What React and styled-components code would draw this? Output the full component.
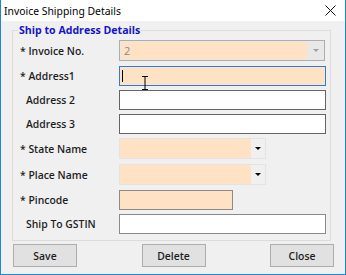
import React from "react";
import styled, { createGlobalStyle } from "styled-components";

const GlobalStyle = createGlobalStyle`
  html, body {
    margin: 0;
    padding: 0;
    background: #f0f0f0;
  }
`;

const uiFont = `"Open Sans", "Noto Sans", "Liberation Sans", sans-serif`;

const Window = styled.div`
  box-sizing: border-box;
  width: 346px;
  height: 275px;
  background: #f0f0f0;
  border: 1px solid #1c86d9;
  border-top: none;
  display: flex;
  flex-direction: column;
  position: relative;
  overflow: hidden;
`;

const TitleBar = styled.div`
  height: 21px;
  flex: none;
  background: #fff;
  display: flex;
  align-items: center;
  justify-content: space-between;
  padding: 0 9px 0 3px;
  font-family: "Noto Sans", "Liberation Sans", sans-serif;
  font-size: 10.4px;
  color: #000;
`;

const CloseX = styled.svg`
  width: 11px;
  height: 11px;
`;

const Body = styled.div`
  flex: 1;
  display: flex;
  flex-direction: column;
  padding: 2px 11px 0 11px;
`;

const Group = styled.fieldset`
  margin: 0 3px 0 0;
  padding: 3px 3px 6px 7px;
  border: 1px solid #dcdcdc;
  display: flex;
  flex-direction: column;
`;

const Legend = styled.legend`
  padding: 0 1px;
  margin-left: -2px;
  font-family: ${uiFont};
  font-weight: 700;
  font-size: 10.6px;
  line-height: 14px;
  color: #1515c8;
`;

const Row = styled.div`
  display: flex;
  align-items: center;
  margin-top: ${(p) => p.$mt ?? 4}px;
`;

const Label = styled.div`
  width: ${(p) => (p.$indent ? 93 : 99)}px;
  padding-left: ${(p) => (p.$indent ? "6px" : "0")};
  font-family: ${uiFont};
  font-weight: 600;
  font-size: 10.4px;
  color: #1e1e1e;
`;

const TextBox = styled.div`
  box-sizing: border-box;
  height: 20px;
  width: ${(p) => p.$w || "207px"};
  background: ${(p) => (p.$req ? "#ffe1c4" : "#fff")};
  border: 1px solid ${(p) => (p.$focus ? "#2a7fd4" : p.$light ? "#8a8a8a" : "#646464")};
  display: flex;
  align-items: center;
  padding-left: 2px;
`;

const Caret = styled.span`
  width: 1px;
  height: 12px;
  background: #000;
`;

const Combo = styled.div`
  box-sizing: border-box;
  height: 21px;
  width: ${(p) => p.$w};
  border: 1px solid ${(p) => (p.$disabled ? "#adadad" : "#e3e3e3")};
  background: ${(p) => (p.$disabled ? "#e8e8e8" : "#f0f0f0")};
  display: flex;
`;

const ComboField = styled.div`
  flex: 1;
  background: #ffe1c4;
  margin: ${(p) => (p.$disabled ? "1px" : "0")};
  padding-left: 3px;
  display: flex;
  align-items: center;
  font-family: ${uiFont};
  font-size: 11px;
  color: #8a8a8a;
`;

const ComboButton = styled.div`
  width: ${(p) => p.$w}px;
  display: flex;
  align-items: center;
  justify-content: center;
  &::after {
    content: "";
    border-left: 3px solid transparent;
    border-right: 3px solid transparent;
    border-top: 3px solid ${(p) => (p.$disabled ? "#a0a0a0" : "#000")};
  }
`;

const ButtonRow = styled.div`
  display: flex;
  justify-content: space-between;
  padding: 3px 0 0 1px;
`;

const Button = styled.button`
  box-sizing: border-box;
  width: 64px;
  height: 23px;
  background: #e1e1e1;
  border: 1px solid #adadad;
  font-family: ${uiFont};
  font-weight: 600;
  font-size: 10.4px;
  color: #1e1e1e;
  padding: 0;
`;

const IBeam = styled.svg`
  position: absolute;
  left: 140px;
  top: 76px;
  width: 8px;
  height: 14px;
`;

export default function App() {
  return (
    <>
      <GlobalStyle />
      <Window>
        <TitleBar>
          <span>Invoice Shipping Details</span>
          <CloseX viewBox="0 0 11 11">
            <path d="M0.5 0.5 L10.5 10.5 M10.5 0.5 L0.5 10.5" stroke="#111" strokeWidth="1" />
          </CloseX>
        </TitleBar>
        <Body>
          <Group>
            <Legend>Ship to Address Details</Legend>

            <Row $mt={0}>
              <Label>* Invoice No.</Label>
              <Combo $disabled $w="206px">
                <ComboField $disabled>2</ComboField>
                <ComboButton $disabled $w={16} />
              </Combo>
            </Row>

            <Row $mt={5}>
              <Label>* Address1</Label>
              <TextBox $req $focus>
                <Caret />
              </TextBox>
            </Row>

            <Row>
              <Label $indent>Address 2</Label>
              <TextBox />
            </Row>

            <Row>
              <Label $indent>Address 3</Label>
              <TextBox />
            </Row>

            <Row>
              <Label>* State Name</Label>
              <Combo $w="147px">
                <ComboField />
                <ComboButton $w={14} />
              </Combo>
            </Row>

            <Row $mt={5}>
              <Label>* Place Name</Label>
              <Combo $w="147px">
                <ComboField />
                <ComboButton $w={14} />
              </Combo>
            </Row>

            <Row $mt={5}>
              <Label>* Pincode</Label>
              <TextBox $req $light $w="114px" />
            </Row>

            <Row>
              <Label $indent>Ship To GSTIN</Label>
              <TextBox $light />
            </Row>
          </Group>
          <ButtonRow>
            <Button>Save</Button>
            <Button>Delete</Button>
            <Button>Close</Button>
          </ButtonRow>
        </Body>
        <IBeam viewBox="0 0 8 14">
          <path d="M1 0.5 H7 M4 0.5 V13.5 M1 13.5 H7" stroke="#000" strokeWidth="1" fill="none" />
        </IBeam>
      </Window>
    </>
  );
}
